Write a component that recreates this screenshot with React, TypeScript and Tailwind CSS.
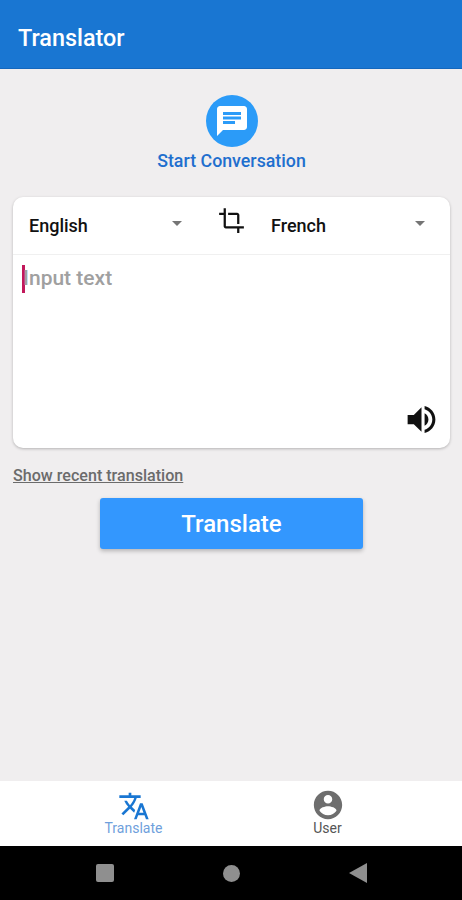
const roboto = "font-['Roboto',sans-serif]"

function Dropdown({ label, className }: { label: string; className: string }) {
  return (
    <div className={`flex items-center justify-between ${className}`}>
      <span className="text-[18px] font-medium text-[#111]">{label}</span>
      <span className="w-0 h-0 border-x-[5.5px] border-x-transparent border-t-[5.5px] border-t-[#757575] mb-1" />
    </div>
  )
}

function Icon({ d, className }: { d: string; className: string }) {
  return (
    <svg viewBox="0 0 24 24" fill="currentColor" className={className}>
      <path d={d} />
    </svg>
  )
}

export default function App() {
  return (
    <div className={`${roboto} flex flex-col h-[900px] w-[462px] bg-[#f0eeef] overflow-hidden`}>
      {/* App bar */}
      <header className="h-[69px] shrink-0 flex items-center px-[18px] pt-[10px] bg-[#1976d2] border-b border-[#1467bd]">
        <h1 className="text-[23.4px] font-medium text-white">Translator</h1>
      </header>

      <main className="flex-1 flex flex-col pl-[13px] pr-[12px] pt-[26px]">
        {/* Start conversation */}
        <div className="flex flex-col items-center">
          <div className="w-[52px] h-[52px] rounded-full bg-[#2b9bf8] flex items-center justify-center">
            <Icon
              className="w-[36px] h-[36px] text-white"
              d="M20 2H4c-1.1 0-1.99.9-1.99 2L2 22l4-4h14c1.1 0 2-.9 2-2V4c0-1.1-.9-2-2-2zM6 9h12v2H6V9zm8 5H6v-2h8v2zm4-6H6V6h12v2z"
            />
          </div>
          <span className="mt-[4px] text-[17.8px] leading-[20px] font-medium text-[#1f6fce]">Start Conversation</span>
        </div>

        {/* Translator card */}
        <div className="mt-[26px] h-[251px] flex flex-col bg-white rounded-[10px] shadow-[0_1px_3px_rgba(0,0,0,0.25)]">
          <div className="h-[58px] shrink-0 flex items-center border-b border-[#f0f0f0]">
            <Dropdown label="English" className="w-[153px] ml-[16px]" />
            <Icon
              className="w-[27px] h-[27px] ml-[36px] mb-[10px] text-[#111]"
              d="M17 15h2V7c0-1.1-.9-2-2-2H9v2h8v8zM7 17V1H5v4H1v2h4v10c0 1.1.9 2 2 2h10v4h2v-4h4v-2H7z"
            />
            <Dropdown label="French" className="w-[154px] ml-[26px]" />
          </div>
          <div className="flex-1 relative flex flex-col justify-between px-[9px] pt-[9px] pb-[10px]">
            <div className="flex items-center h-[30px]">
              <span className="w-[3px] h-[28px] bg-[#c2185b]" />
              <span className="text-[21px] font-medium text-[#a0a0a0] ml-[-2px]">Input text</span>
            </div>
            <Icon
              className="self-end w-[37px] h-[37px] text-[#111] mr-[1px]"
              d="M3 9v6h4l5 5V4L7 9H3zm13.5 3c0-1.77-1.02-3.29-2.5-4.03v8.05c1.48-.73 2.5-2.25 2.5-4.02zM14 3.23v2.06c2.89.86 5 3.54 5 6.71s-2.11 5.85-5 6.71v2.06c4.01-.91 7-4.49 7-8.77s-2.99-7.86-7-8.77z"
            />
          </div>
        </div>

        <span className="mt-[18px] self-start text-[16.1px] leading-[20px] font-medium text-[#6b6b6b] underline">
          Show recent translation
        </span>

        <button className="mt-[12px] ml-[87px] self-start w-[263px] h-[51px] rounded-[3px] bg-[#3397fe] text-white text-[24px] font-medium shadow-[0_2px_4px_rgba(0,0,0,0.25)]">
          Translate
        </button>
      </main>

      {/* Bottom tabs */}
      <nav className="h-[65px] shrink-0 flex justify-center bg-white pr-[1px]">
        <div className="w-[194px] flex flex-col items-center pt-[9px] text-[#1976d2]">
          <Icon
            className="w-[32px] h-[32px]"
            d="M12.87 15.07l-2.54-2.51.03-.03c1.74-1.94 2.98-4.17 3.71-6.53H17V4h-7V2H8v2H1v1.99h11.17C11.5 7.92 10.44 9.75 9 11.35 8.07 10.32 7.3 9.19 6.69 8h-2c.73 1.63 1.73 3.17 2.98 4.56l-5.09 5.02L4 19l5-5 3.11 3.11.76-2.04zM18.5 10h-2L12 22h2l1.12-3h4.75L21 22h2l-4.5-12zm-2.62 7l1.62-4.33L19.12 17h-3.24z"
          />
          <span className="text-[14px] leading-[16px] text-[#6f9fdc] mt-[-2px]">Translate</span>
        </div>
        <div className="w-[194px] flex flex-col items-center pt-[7px] text-[#6e6e6e]">
          <Icon
            className="w-[34px] h-[34px]"
            d="M12 2C6.48 2 2 6.48 2 12s4.48 10 10 10 10-4.48 10-10S17.52 2 12 2zm0 3c1.66 0 3 1.34 3 3s-1.34 3-3 3-3-1.34-3-3 1.34-3 3-3zm0 14.2c-2.5 0-4.71-1.28-6-3.22.03-1.99 4-3.08 6-3.08 1.99 0 5.97 1.09 6 3.08-1.29 1.94-3.5 3.22-6 3.22z"
          />
          <span className="text-[14px] leading-[16px] text-[#555] mt-[-2px]">User</span>
        </div>
      </nav>

      {/* System navigation */}
      <div className="h-[54px] shrink-0 bg-black flex items-center justify-center gap-[109px] pl-[1px]">
        <span className="w-[18px] h-[18px] rounded-[2px] bg-[#8f8f8f]" />
        <span className="w-[17px] h-[17px] rounded-full bg-[#8f8f8f]" />
        <span className="w-0 h-0 border-y-[10px] border-y-transparent border-r-[18px] border-r-[#8f8f8f]" />
      </div>
    </div>
  )
}
